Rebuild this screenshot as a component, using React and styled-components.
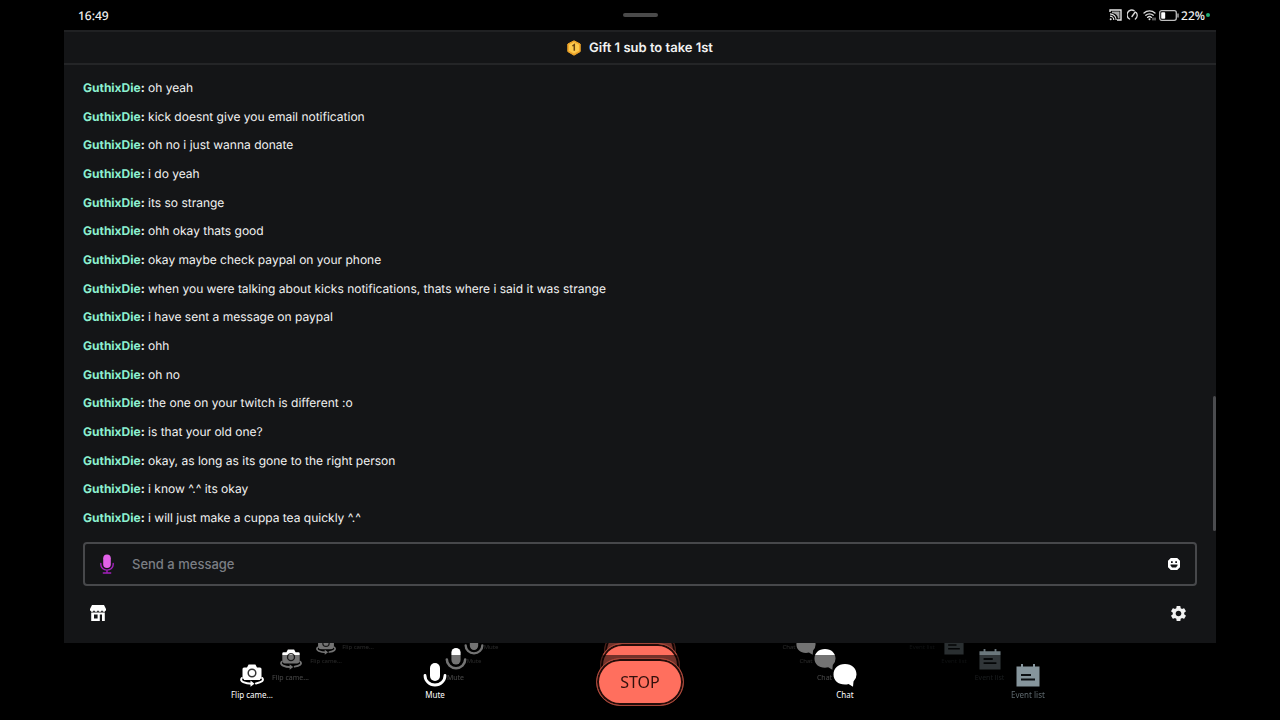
import React from 'react'
import styled, { createGlobalStyle } from 'styled-components';
import { MdSettings } from 'react-icons/md';

const GlobalStyle = createGlobalStyle`
    * {
        box-sizing: border-box;
    }
    body {
        margin: 0;
        background: #000;
        color: #f2f2f2;
        font-family: Inter, sans-serif;
        text-rendering: geometricPrecision;
    }
    button {
        padding: 0;
        border: 0;
        background: none;
        color: inherit;
        cursor: pointer;
    }
    svg {
        display: block;
        flex: none;
    }
`

const Page = styled.div`
    display: flex;
    flex-direction: column;
    min-height: 100vh;
    overflow: hidden;
`

const StatusBar = styled.header`
    display: grid;
    grid-template-columns: 1fr auto 1fr;
    align-items: center;
    height: 30px;
    padding: 0 70px;
    font-family: "Noto Sans", sans-serif;
    font-size: 12px;
    font-weight: 500;
`

const Clock = styled.time`
    padding-left: 8px;
`

const Handle = styled.span`
    width: 35px;
    height: 4px;
    border-radius: 2px;
    background: #4a4a4a;
`

const StatusIcons = styled.div`
    display: flex;
    align-items: center;
    justify-content: flex-end;
    gap: 5px;
`

const Battery = styled.span`
    display: flex;
    align-items: center;
    gap: 1px;
    margin-left: -2px;
`

const GreenDot = styled.i`
    width: 4px;
    height: 4px;
    border-radius: 50%;
    background: #1fae73;
`

const Panel = styled.main`
    flex: 1;
    display: flex;
    flex-direction: column;
    margin: 0 5%;
    background: #141517;
`

const GiftBar = styled.div`
    display: flex;
    align-items: center;
    justify-content: center;
    gap: 8px;
    height: 35px;
    border-top: 2px solid #202123;
    border-bottom: 2px solid #242527;
    font-size: 13px;
    line-height: 16px;
    font-weight: 600;
`

const ChatArea = styled.div`
    position: relative;
    flex: 1;
    display: flex;
    padding: 13px 19px 4px;
`

const Messages = styled.ul`
    flex: 1;
    display: flex;
    flex-direction: column;
    justify-content: space-between;
    margin: 0;
    padding: 0;
    list-style: none;
`

const Message = styled.li`
    font-size: 12px;
    line-height: 20px;
`

const Name = styled.b`
    font-weight: 700;
    color: ${props => props.$color};
`

const ScrollThumb = styled.span`
    position: absolute;
    right: 0;
    bottom: 1px;
    width: 3px;
    height: 29%;
    border-radius: 2px;
    background: #4b4c4f;
`

const Composer = styled.form`
    display: flex;
    align-items: center;
    height: 44px;
    margin: 10px 19px 0;
    padding: 0 15px;
    border: 2px solid #47484b;
    border-radius: 4px;
`

const TextBox = styled.input`
    flex: 1;
    min-width: 0;
    margin: 0 18px;
    padding: 0;
    border: 0;
    outline: 0;
    background: none;
    color: #f2f2f2;
    font-family: inherit;
    font-size: 13px;
    font-weight: 500;
    &::placeholder {
        color: #7b7e84;
        opacity: 1;
    }
`

const Tools = styled.div`
    display: flex;
    align-items: center;
    justify-content: space-between;
    height: 57px;
    padding: 0 28px 3px 26px;
`

const Dock = styled.footer`
    position: relative;
    height: 77px;
    overflow: hidden;
    font-family: "Noto Sans", sans-serif;
`

// one row of controls, the smaller ones fade away behind the front one
const Layer = styled.div`
    position: absolute;
    top: ${props => props.$size.top}px;
    left: 0;
    right: 0;
    display: flex;
    align-items: center;
    justify-content: center;
    min-height: ${props => props.$size.stopHeight}px;
`

const DockCell = styled.div`
    display: flex;
    justify-content: center;
    width: ${props => props.$width}px;
`

const DockButton = styled.button`
    display: flex;
    flex-direction: column;
    align-items: center;
    gap: ${props => props.$size.gap}px;
    color: ${props => props.$muted ? '#86959c' : '#fff'};
    font-family: inherit;
    font-size: ${props => props.$size.font}px;
    line-height: ${props => props.$size.line}px;
    svg {
        opacity: ${props => props.$size.iconFade * (props.$muted ? props.$size.mutedFade : 1)};
    }
`

const DockLabel = styled.span`
    opacity: ${props => props.$size.labelFade * (props.$muted ? 0.7 : 1)};
`

const StopButton = styled.button`
    width: ${props => props.$size.stopWidth}px;
    height: ${props => props.$size.stopHeight}px;
    border: 1px solid #a34538;
    border-radius: 24px;
    background: #ff6f5e;
    box-shadow: inset 0 0 0 2px #250c09;
    color: #32100c;
    font-family: inherit;
    font-size: ${props => props.$size.stopFont}px;
    filter: brightness(${props => props.$size.iconFade});
`

const Shade = styled.div`
    position: absolute;
    inset: 12px 0 0;
    background: rgba(0, 0, 0, 0.55);
`

const CastIcon = () => (
    <svg width="13" height="12" viewBox="0 0 13 12" fill="none" stroke="#e6e6e6">
        <path d="M1 3V1h11v10H8" strokeWidth="1.4" />
        <path d="M3 2.5h7.5v7H9A6 6 0 0 0 3 4z" fill="#a5a5a5" stroke="none" />
        <path d="M1 4.8a6.2 6.2 0 0 1 6.2 6.2M1 7.2A3.8 3.8 0 0 1 4.8 11" strokeWidth="1.2" />
        <circle cx="1.7" cy="10.3" r="1" fill="#e6e6e6" stroke="none" />
    </svg>
);

const SpeedIcon = () => (
    <svg width="11" height="12" viewBox="0 0 11 12" fill="none" stroke="#d8d8d8" strokeWidth="1.4" strokeLinecap="round">
        <path d="M2.6 10A4.7 4.7 0 0 1 7 1.6M9.3 3.7A4.7 4.7 0 0 1 8.4 10M5 7.5 8.2 3" />
    </svg>
);

const WifiIcon = () => (
    <svg width="13" height="12" viewBox="0 0 13 12" fill="none" stroke="#dedede" strokeWidth="1.3" strokeLinecap="round">
        <path d="M1 4a8 8 0 0 1 11 0M2.8 6.3a5.3 5.3 0 0 1 7.4 0M4.5 8.4a3 3 0 0 1 4 0" />
        <circle cx="6.5" cy="10.3" r="1" fill="#dedede" stroke="none" />
        <path d="M10 9v2M12 9v2" strokeWidth=".8" />
    </svg>
);

const BatteryIcon = () => (
    <svg width="21" height="11" viewBox="0 0 21 11">
        <rect x=".7" y=".7" width="16.6" height="9.6" rx="2" fill="none" stroke="#bdbdbd" strokeWidth="1.3" />
        <rect x="2.2" y="2.2" width="4" height="6.6" rx=".8" fill="#fff" />
        <path d="M19 3.5v4" stroke="#bdbdbd" strokeWidth="1.3" />
    </svg>
);

const BadgeIcon = () => (
    <svg width="14" height="16" viewBox="0 0 14 16">
        <path d="M7 .8 13.2 4v7.6L7 15.2.8 11.6V4z" fill="#f0a62b" stroke="#f0a62b" strokeLinejoin="round" />
        <path d="M7 2 12 4.7v6L7 13.5l-5-2.8v-6z" fill="#fcc94c" />
        <path d="m5.4 6 1.9-1.3v6" fill="none" stroke="#6b4310" strokeWidth="1.5" />
    </svg>
);

const VoiceIcon = () => (
    <svg width="14" height="20" viewBox="0 0 14 20" fill="none" stroke="#a320bd" strokeWidth="1.4" strokeLinecap="round">
        <rect x="3.2" y=".5" width="7.6" height="13.5" rx="3.8" fill="#e261e8" stroke="none" />
        <path d="M.8 9.5v1a6.2 5.6 0 0 0 12.4 0v-1M7 16.3v2.5M3.3 19h7.4" />
    </svg>
);

const SmileIcon = () => (
    <svg width="12" height="12" viewBox="0 0 12 12">
        <path d="M3 0h6l3 3v6l-3 3H3L0 9V3z" fill="#fff" stroke="#fff" strokeLinejoin="round" strokeWidth=".4" />
        <path d="M3 3.2h1.7v1.9H3zM7.3 3.2H9v1.9H7.3zM2.5 6.6h7v.8L8 9.4H4L2.5 7.4z" fill="#141517" />
    </svg>
);

const ShopIcon = () => (
    <svg width="16" height="16" viewBox="0 0 16 16">
        <path d="M2 0h12l2 4v1.7h-1v1h-2.2v-1h-1.6v1H8.8v-1H7.2v1H4.8v-1H3.2v1H1v-1H0V4z" fill="#fff" />
        <path d="M1.2 7.6h13.6V16H12V9.4H9.8V16H1.2zM4 9.5v4h3.6v-4z" fill="#fff" fillRule="evenodd" />
    </svg>
);

const CameraIcon = ({ size }) => (
    <svg width={size} height={size} viewBox="0 0 24 24">
        <path d="M4 4.500h3l1.6-3h6.8l1.600 3h3q1.5 0 1.5 1.5V17h-19V6Q2.500 4.500 4 4.500z" fill="#fff" />
        <circle cx="12" cy="10" r="3.8" fill="none" stroke="#333" strokeWidth="1.5" />
        <path d="M2.5 15C-.8 18.5 5 20.8 12 20.8M21.5 15c2.5 2.5 0 4.5-5.5 5.4" fill="none" stroke="#000" strokeWidth="4.5" />
        <path d="M1.8 15C-.8 18.5 5 20.8 12 20.8M22.2 15c2.2 2.5-.7 4.5-6.2 5.4" fill="none" stroke="#fff" strokeWidth="2" strokeLinecap="round" />
        <path d="m10.5 17.6 4 3.2-4 3z" fill="#fff" />
    </svg>
);

const MicIcon = ({ size }) => (
    <svg width={size} height={size} viewBox="0 0 24 24">
        <rect x="7" y="0" width="10" height="18" rx="5" fill="#fff" />
        <path d="M2 12.5a10 9.5 0 0 0 20 0" fill="none" stroke="#fff" strokeWidth="2.8" strokeLinecap="round" />
    </svg>
);

const BubbleIcon = ({ size }) => (
    <svg width={size} height={size} viewBox="0 0 24 24">
        <path d="M12 1C5 1 .5 5.5.5 11.500S5 21.500 12 21.500q2 0 3.500-.5l4.500 2.800.500-5.300q3-2.800 3-7C23.500 5.500 19 1 12 1z" fill="#fff" />
    </svg>
);

const EventIcon = ({ size }) => (
    <svg width={size} height={size} viewBox="0 0 24 24">
        <path d="M.5 3.500H5V1h2v2.500h10V1h2v2.500h4.500v20H.500z" fill="#86959c" />
        <path d="M5 12h10M5 16.500h14" stroke="#0c1013" strokeWidth="2" />
    </svg>
);

const messages = [
    'oh yeah',
    'kick doesnt give you email notification',
    'oh no i just wanna donate',
    'i do yeah',
    'its so strange',
    'ohh okay thats good',
    'okay maybe check paypal on your phone',
    'when you were talking about kicks notifications, thats where i said it was strange',
    'i have sent a message on paypal',
    'ohh',
    'oh no',
    'the one on your twitch is different :o',
    'is that your old one?',
    'okay, as long as its gone to the right person',
    'i know ^.^ its okay',
    'i will just make a cuppa tea quickly ^.^'
];

const sizes = {
    front: { top: 15, cell: 183, stopCell: 227, icon: 24, font: 8, line: 12, gap: 2, stopWidth: 88, stopHeight: 48, stopFont: 16, iconFade: 1, mutedFade: 1, labelFade: 1 },
    second: { top: 0, cell: 165, stopCell: 204, icon: 22, font: 7, line: 11, gap: 2, stopWidth: 80, stopHeight: 44, stopFont: 15, iconFade: 1, mutedFade: 0.8, labelFade: 0.6 },
    third: { top: -12, cell: 148, stopCell: 184, icon: 20, font: 6, line: 10, gap: 1, stopWidth: 72, stopHeight: 39, stopFont: 13, iconFade: 0.45, mutedFade: 0.7, labelFade: 0.35 },
    fourth: { top: -23, cell: 133, stopCell: 165, icon: 18, font: 6, line: 9, gap: 2, stopHeight: 35, iconFade: 0.2, mutedFade: 0.5, labelFade: 0.16 }
};

const DockItem = ({ size, icon: Icon, label, muted, hidden }) => (
    <DockCell $width={size.cell}>
        <DockButton type="button" $size={size} $muted={muted} tabIndex={hidden ? -1 : 0}>
            <Icon size={size.icon} />
            <DockLabel $size={size} $muted={muted}>{label}</DockLabel>
        </DockButton>
    </DockCell>
);

const DockLayer = ({ size, hidden }) => (
    <Layer $size={size} aria-hidden={hidden}>
        <DockItem size={size} hidden={hidden} icon={CameraIcon} label="Flip came..." />
        <DockItem size={size} hidden={hidden} icon={MicIcon} label="Mute" />
        <DockCell $width={size.stopCell}>
            {
                size.stopFont && <StopButton type="button" $size={size} tabIndex={hidden ? -1 : 0}>STOP</StopButton>
            }
        </DockCell>
        <DockItem size={size} hidden={hidden} icon={BubbleIcon} label="Chat" />
        <DockItem size={size} hidden={hidden} icon={EventIcon} label="Event list" muted />
    </Layer>
);

export default function App() {
    return (
        <Page>
            <GlobalStyle />
            <StatusBar>
                <Clock>16:49</Clock>
                <Handle />
                <StatusIcons>
                    <CastIcon />
                    <SpeedIcon />
                    <WifiIcon />
                    <Battery>
                        <BatteryIcon />
                        22%
                        <GreenDot />
                    </Battery>
                </StatusIcons>
            </StatusBar>
            <Panel>
                <GiftBar>
                    <BadgeIcon />
                    <span>Gift 1 sub to take 1st</span>
                </GiftBar>
                <ChatArea>
                    <Messages>
                        {
                            messages.map((x, i) => (
                                <Message key={i}>
                                    <Name $color="#8cf0d0">GuthixDie</Name><Name $color="#f2f2f2">:</Name> {x}
                                </Message>
                            ))
                        }
                    </Messages>
                    <ScrollThumb />
                </ChatArea>
                <Composer onSubmit={e => e.preventDefault()}>
                    <button type="button" aria-label="Voice input"><VoiceIcon /></button>
                    <TextBox type="text" aria-label="Message" placeholder="Send a message" />
                    <button type="button" aria-label="Emotes"><SmileIcon /></button>
                </Composer>
                <Tools>
                    <button type="button" aria-label="Shop"><ShopIcon /></button>
                    <button type="button" aria-label="Settings"><MdSettings size={19} /></button>
                </Tools>
            </Panel>
            <Dock>
                <DockLayer size={sizes.fourth} hidden />
                <DockLayer size={sizes.third} hidden />
                <DockLayer size={sizes.second} hidden />
                <Shade />
                <DockLayer size={sizes.front} />
            </Dock>
        </Page>
    );
}
